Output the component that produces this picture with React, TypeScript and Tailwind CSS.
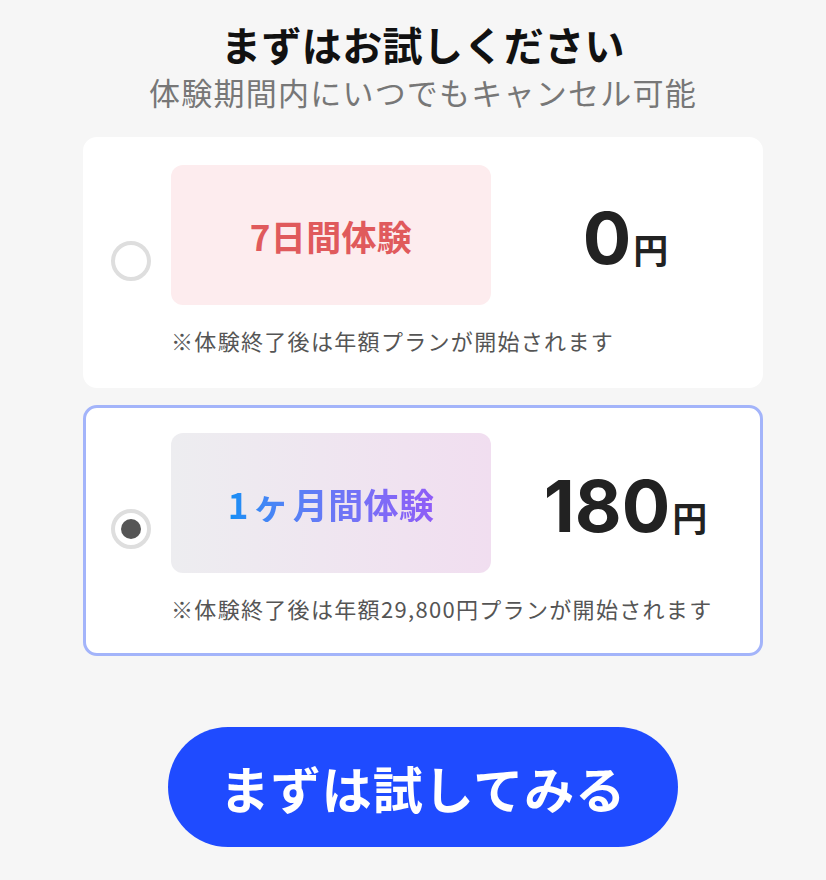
import { useState } from "react";

const FONT = "'Noto Sans CJK JP', 'Noto Sans', sans-serif";
const NUM_FONT = "Inter, 'Noto Sans CJK JP', sans-serif";

interface Plan {
  id: string;
  label: string;
  price: string;
  note: string;
  tone: "red" | "grad";
}

const PLANS: Plan[] = [
  { id: "7d", label: "7日間体験", price: "0", note: "※体験終了後は年額プランが開始されます", tone: "red" },
  { id: "1m", label: "1ヶ月間体験", price: "180", note: "※体験終了後は年額29,800円プランが開始されます", tone: "grad" },
];

export default function App() {
  const [selected, setSelected] = useState("1m");

  return (
    <div
      className="min-h-[880px] w-full bg-[#f6f6f6] pl-5 pt-[18px]"
      style={{ fontFamily: FONT }}
    >
      <div className="mx-auto flex w-[680px] flex-col items-center">
        <h1 className="text-[40px] font-bold leading-[1.3] tracking-[0.01em] text-[#111]">まずはお試しください</h1>
        <p className="mt-[2px] text-[31px] leading-[1.3] tracking-[0.04em] text-[#777]">
          体験期間内にいつでもキャンセル可能
        </p>

        <div className="mt-[25px] flex w-full flex-col gap-[17px]">
          {PLANS.map((plan) => {
            const active = plan.id === selected;
            return (
              <button
                key={plan.id}
                type="button"
                onClick={() => setSelected(plan.id)}
                className={`flex w-full items-center gap-5 rounded-[14px] border-[3px] bg-white pt-[25px] pb-[28px] pl-[25px] text-left ${
                  active ? "border-[#a3b4fa]" : "border-white"
                }`}
              >
                {/* radio */}
                <span className="flex h-10 w-10 shrink-0 items-center justify-center rounded-full border-4 border-[#dedede]">
                  {active && <span className="h-5 w-5 rounded-full bg-[#555]" />}
                </span>

                <div className="flex flex-1 flex-col">
                  <div className="flex items-center">
                    <div
                      className={`flex h-[140px] w-[320px] items-center justify-center rounded-[12px] ${
                        plan.tone === "red" ? "bg-[#fdecee]" : "bg-linear-to-r from-[#ededf0] to-[#f1def0]"
                      }`}
                    >
                      <span
                        className={`text-[35px] font-bold leading-none tracking-[0.01em] ${
                          plan.tone === "red"
                            ? "text-[#e05a5c]"
                            : "bg-linear-to-r from-[#0a8ef5] to-[#8f5cf7] bg-clip-text text-transparent"
                        }`}
                      >
                        {plan.tone === "red" ? (
                          plan.label
                        ) : (
                          <>
                            1<span className="inline-block w-[1.2em] text-center text-[1.05em]">ヶ</span>月間体験
                          </>
                        )}
                      </span>
                    </div>
                    <div className="flex flex-1 items-baseline justify-center pt-[6px] text-[#222]">
                      <span className="text-[72px] font-bold leading-none" style={{ fontFamily: NUM_FONT }}>
                        {plan.price}
                      </span>
                      <span className="ml-[2px] text-[35px] font-bold leading-none">円</span>
                    </div>
                  </div>
                  <p className="mt-[19px] text-[22px] leading-[1.5] tracking-[0.06em] text-[#555]">{plan.note}</p>
                </div>
              </button>
            );
          })}
        </div>

        <button
          type="button"
          className="mt-[71px] h-[120px] w-[510px] rounded-full bg-[#1f4bff] text-[50px] font-bold tracking-[0.02em] text-white"
        >
          まずは試してみる
        </button>
      </div>
    </div>
  );
}
